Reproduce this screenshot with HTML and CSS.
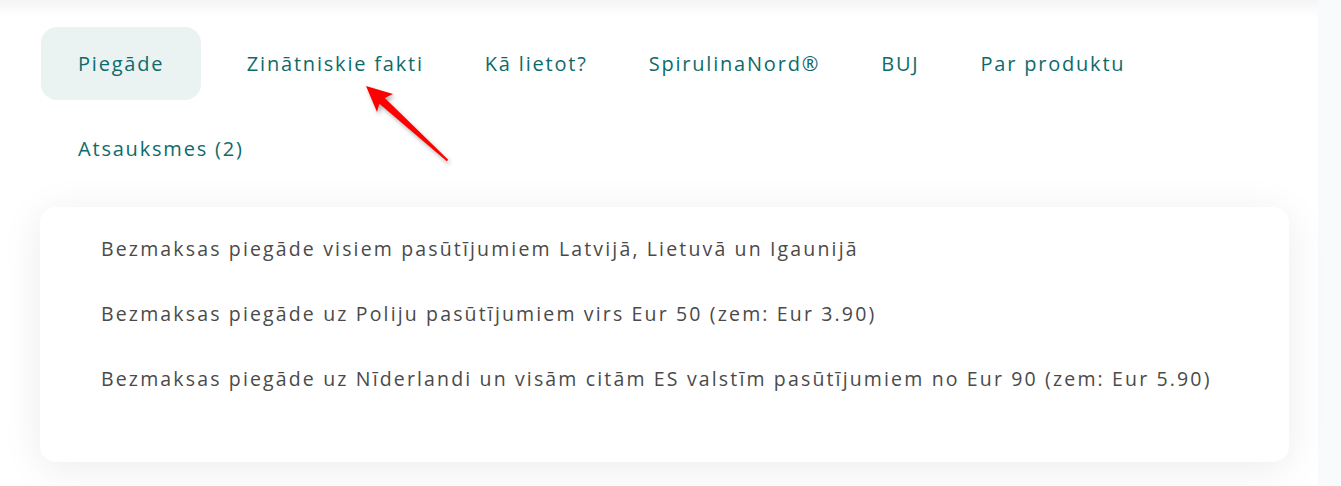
FILE: index.html
```html
<!DOCTYPE html>
<html lang="lv">
<head>
    <meta charset="UTF-8">
    <meta name="viewport" content="width=device-width, initial-scale=1.0">
    <title>Piegāde</title>
    <link rel="stylesheet" href="styles.css">
</head>
<body>
    <div class="product-tabs">
        <ul class="tabs">
            <li class="tab active">Piegāde</li>
            <li class="tab">Zinātniskie fakti</li>
            <li class="tab">Kā lietot?</li>
            <li class="tab">SpirulinaNord®</li>
            <li class="tab">BUJ</li>
            <li class="tab">Par produktu</li>
            <li class="tab tab-second-row">Atsauksmes (2)</li>
        </ul>

        <div class="tab-panel">
            <p>Bezmaksas piegāde visiem pasūtījumiem Latvijā, Lietuvā un Igaunijā</p>
            <p>Bezmaksas piegāde uz Poliju pasūtījumiem virs Eur 50 (zem: Eur 3.90)</p>
            <p>Bezmaksas piegāde uz Nīderlandi un visām citām ES valstīm pasūtījumiem no Eur 90 (zem: Eur 5.90)</p>
        </div>

        <svg class="annotation-arrow" width="100" height="90" viewBox="360 80 100 90">
            <polygon points="366,86 393,94 384.8,98 448.2,159.8 446.8,161.2 379.4,103.8 377,112" fill="#ff0000"/>
        </svg>
    </div>
</body>
</html>
```

FILE: styles.css
```css
* {
    margin: 0;
    padding: 0;
    box-sizing: border-box;
}

body {
    font-family: "Open Sans", Arial, sans-serif;
    background-color: #f9fafb;
    overflow: hidden;
}

.product-tabs {
    position: relative;
    background: linear-gradient(#f4f5f6, #fbfbfc 10px, white 18px);
    width: 1318px;
    padding: 27px 0 24px 40px;
    min-height: 486px;
}

.tabs {
    list-style: none;
    display: flex;
    flex-wrap: wrap;
    row-gap: 12px;
    max-width: 1160px;
}

.tab {
    height: 73px;
    display: flex;
    align-items: center;
    padding: 0 30.5px;
    color: #0d6b6b;
    font-size: 20px;
    letter-spacing: 1.8px;
    cursor: pointer;
}

.tab.active {
    padding: 0 37px 0 37px;
    margin-left: 1px;
    margin-right: 15px;
    background-color: #eaf3f2;
    border-radius: 16px;
}

.tab-second-row {
    padding-left: 38px;
}

.tab-panel {
    margin-top: 22px;
    width: 1249px;
    background-color: white;
    border-radius: 16px;
    box-shadow: 0 6px 40px rgba(0, 0, 0, 0.08);
    padding: 28px 61px 70px;
}

.tab-panel p {
    color: #4a4a4a;
    font-size: 19.5px;
    line-height: 27px;
    letter-spacing: 2.15px;
    margin-bottom: 38px;
}

.tab-panel p:last-child {
    margin-bottom: 0;
}

.annotation-arrow {
    position: absolute;
    left: 360px;
    top: 80px;
    filter: drop-shadow(2px 3px 2px rgba(0, 0, 0, 0.3));
}
```
